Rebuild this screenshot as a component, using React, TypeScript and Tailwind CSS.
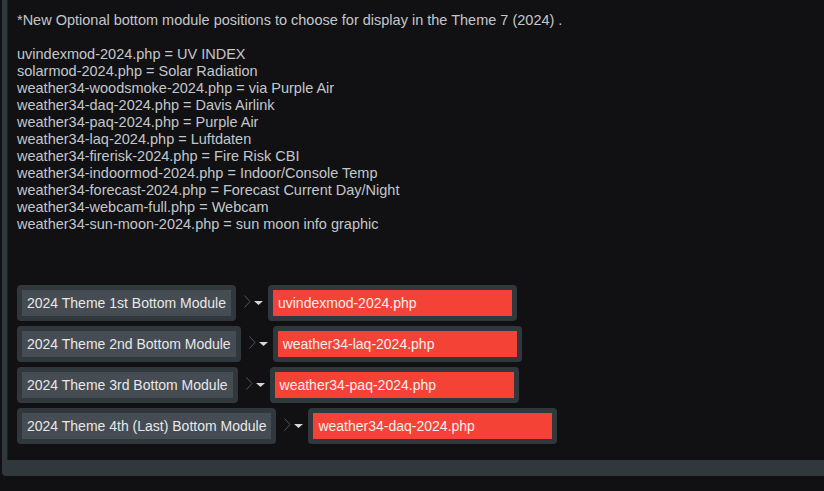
import React from "react";

const lines = [
  "uvindexmod-2024.php = UV INDEX",
  "solarmod-2024.php = Solar Radiation",
  "weather34-woodsmoke-2024.php = via Purple Air",
  "weather34-daq-2024.php = Davis Airlink",
  "weather34-paq-2024.php = Purple Air",
  "weather34-laq-2024.php = Luftdaten",
  "weather34-firerisk-2024.php = Fire Risk CBI",
  "weather34-indoormod-2024.php = Indoor/Console Temp",
  "weather34-forecast-2024.php = Forecast Current Day/Night",
  "weather34-webcam-full.php = Webcam",
  "weather34-sun-moon-2024.php = sun moon info graphic",
];

const rows = [
  ["2024 Theme 1st Bottom Module", "uvindexmod-2024.php"],
  ["2024 Theme 2nd Bottom Module", "weather34-laq-2024.php"],
  ["2024 Theme 3rd Bottom Module", "weather34-paq-2024.php"],
  ["2024 Theme 4th (Last) Bottom Module", "weather34-daq-2024.php"],
];

export default function App() {
  return (
    <div
      className="min-h-screen w-full bg-[#111114] overflow-hidden"
      style={{ fontFamily: '"Liberation Sans", Arial, sans-serif' }}
    >
      <div className="ml-[2px] bg-[#30373d] pl-[5px] pb-[16px] rounded-bl-[4px]">
        <div className="bg-[#111114] border-l border-[#1c2024] pl-[9px] pt-[12px] pb-[16px]">
          <div className="text-[14.5px] leading-[17px] text-[#c3c7cb] whitespace-nowrap">
            <div>*New Optional bottom module positions to choose for display in the Theme 7 (2024) .</div>
            <div className="h-[17px]" />
            {lines.map((l) => (
              <div key={l}>{l}</div>
            ))}
          </div>
          <div className="mt-[52px] flex flex-col gap-[5px]">
            {rows.map(([label, value]) => (
              <div key={label} className="flex items-center">
                <div className="bg-[#30373d] p-[5px] rounded-[4px]">
                  <div className="bg-[#454c53] h-[26px] px-[5px] flex items-center text-[14px] text-[#e8e8e8] whitespace-nowrap">
                    {label}
                  </div>
                </div>
                <svg width="7" height="13" viewBox="0 0 7 13" className="ml-[8px] -mt-[3px]">
                  <polyline points="0.5,0.5 6,6.5 0.5,12.5" fill="none" stroke="#50575e" strokeWidth="1" />
                </svg>
                <svg width="9" height="4" viewBox="0 0 9 4" className="ml-[3px]">
                  <polygon points="0,0 9,0 4.5,4" fill="#d6d6d6" />
                </svg>
                <div className="ml-[5px] bg-[#30373d] p-[5px] rounded-[4px]">
                  <div className="bg-[#f44336] w-[239px] h-[26px] px-[5px] flex items-center text-[14px] text-[#fbeeee] whitespace-nowrap">
                    {value}
                  </div>
                </div>
              </div>
            ))}
          </div>
        </div>
      </div>
    </div>
  );
}
